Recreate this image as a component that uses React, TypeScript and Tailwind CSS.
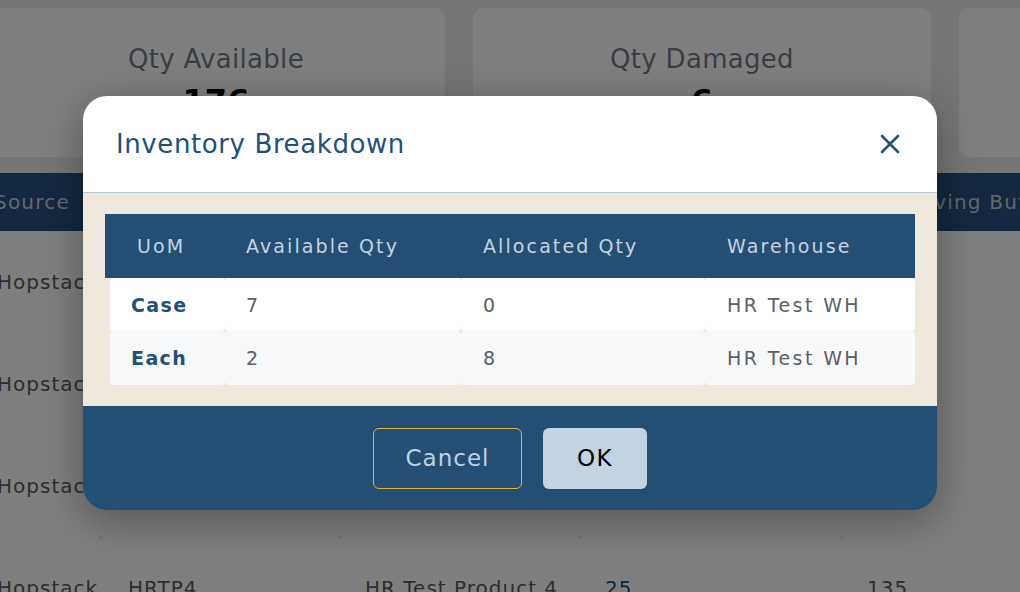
import React from "react";

const font = { fontFamily: '"DejaVu Sans", "Noto Sans", sans-serif' };

function BgCell({ w, children, className = "" }: { w: string; children?: React.ReactNode; className?: string }) {
  return (
    <div className={`${w} shrink-0 h-full bg-white rounded-[4px] flex items-center whitespace-nowrap overflow-hidden ${className}`}>{children}</div>
  );
}

function BgRow() {
  return (
    <div className="flex h-[102px] text-[20px] text-[#5b5b5b] tracking-[1px]">
      <BgCell w="w-[104px]" className="-ml-[3px]">Hopstack</BgCell>
      <BgCell w="w-[238px]" className="pl-[27px]">HRTP4</BgCell>
      <BgCell w="w-[240px]" className="pl-[26px]">HR Test Product 4</BgCell>
      <BgCell w="w-[263px]" className="pl-[26px] text-[#1f4e79]">25</BgCell>
      <BgCell w="w-[200px]" className="pl-[25px]">135</BgCell>
    </div>
  );
}

export default function App() {
  return (
    <div className="relative w-[1020px] h-[592px] overflow-hidden bg-[#ececec]" style={font}>
      {/* Background page */}
      <div className="flex flex-col">
        <div className="flex gap-[28px] pt-[8px] -ml-[13px]">
          <div className="w-[458px] h-[149px] shrink-0 bg-white rounded-[10px] flex flex-col items-center pt-[35px]">
            <div className="text-[26px] text-[#737a8b] leading-[32px] tracking-[0.3px]">Qty Available</div>
            <div className="text-[32px] font-bold text-black leading-[36px] mt-[8px]">176</div>
          </div>
          <div className="w-[458px] h-[149px] shrink-0 bg-white rounded-[10px] flex flex-col items-center pt-[35px]">
            <div className="text-[26px] text-[#737a8b] leading-[32px] tracking-[0.3px]">Qty Damaged</div>
            <div className="text-[32px] font-bold text-black leading-[36px] mt-[8px]">6</div>
          </div>
          <div className="w-[458px] h-[149px] shrink-0 bg-white rounded-[10px]" />
        </div>
        <div className="mt-[16px] h-[58px] bg-[#28507e] flex items-center text-[20px] text-[#c9ced6] tracking-[1.2px] whitespace-nowrap">
          <div className="w-[880px] shrink-0 -ml-[6px]">Source</div>
          <div className="shrink-0">Receiving Buffer</div>
        </div>
        <BgRow />
        <BgRow />
        <BgRow />
        <BgRow />
      </div>

      {/* Overlay */}
      <div className="absolute inset-0 bg-black/50 flex justify-center pt-[96px]">
        <div className="w-[854px] h-[414px] rounded-[24px] overflow-hidden flex flex-col shadow-[0_10px_40px_rgba(0,0,0,0.35)]">
          {/* Header */}
          <div className="h-[97px] bg-white border-b border-[#b5c7d8] flex items-center justify-between pl-[33px] pr-[36px] shrink-0">
            <h2 className="text-[26px] text-[#22507a] tracking-[0.6px]">Inventory Breakdown</h2>
            <svg width="22" height="22" viewBox="0 0 22 22">
              <path d="M3 3 L19 19 M19 3 L3 19" stroke="#22507a" strokeWidth="2.6" strokeLinecap="round" />
            </svg>
          </div>
          {/* Body */}
          <div className="bg-[#efe8dc] px-[22px] pt-[21px] pb-[22px] shrink-0">
            <div className="flex h-[64px] bg-[#234f74] text-[#c5d3e0] text-[19px] tracking-[2.1px] items-center whitespace-nowrap">
              <div className="w-[120px] shrink-0 pl-[32px]">UoM</div>
              <div className="w-[236px] shrink-0 pl-[21px]">Available Qty</div>
              <div className="w-[244px] shrink-0 pl-[22px]">Allocated Qty</div>
              <div className="flex-1 pl-[22px]">Warehouse</div>
            </div>
            {[
              ["Case", "7", "0", "HR Test WH", "bg-white", "h-[53px] pt-[2px]"],
              ["Each", "2", "8", "HR Test WH", "bg-[#f7f9fb]", "h-[54px] pt-[1px]"],
            ].map((r) => (
              <div key={r[0]} className={`flex ml-[5px] h-[53px] text-[19px] tracking-[2.4px] text-[#5a5f66] whitespace-nowrap`}>
                <div className={`w-[115px] shrink-0 ${r[4]} rounded-[4px] pl-[21px] flex items-center font-bold text-[#22507a] tracking-[1.4px] ${r[5]}`}>{r[0]}</div>
                <div className={`w-[236px] shrink-0 ${r[4]} rounded-[4px] pl-[21px] flex items-center ${r[5]}`}>{r[1]}</div>
                <div className={`w-[244px] shrink-0 ${r[4]} rounded-[4px] pl-[22px] flex items-center ${r[5]}`}>{r[2]}</div>
                <div className={`flex-1 ${r[4]} rounded-[4px] pl-[22px] flex items-center ${r[5]}`}>{r[3]}</div>
              </div>
            ))}
          </div>
          {/* Footer */}
          <div className="flex-1 bg-[#234f74] flex items-center justify-center gap-[21px]">
            <button className="w-[149px] h-[61px] rounded-[6px] border border-[#e8b339] text-[#c2d1e0] text-[23px] tracking-[1px]">Cancel</button>
            <button className="w-[104px] h-[61px] rounded-[6px] bg-[#c3d3e1] text-black text-[23px] tracking-[1.5px]">OK</button>
          </div>
        </div>
      </div>
    </div>
  );
}
